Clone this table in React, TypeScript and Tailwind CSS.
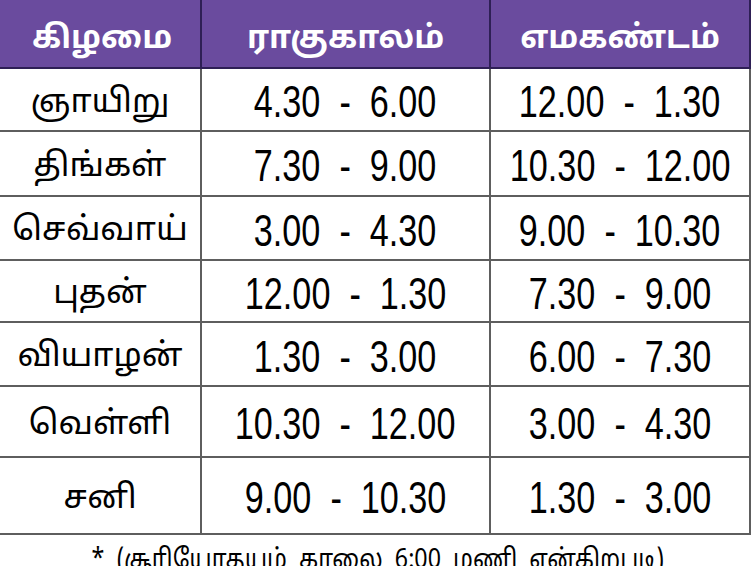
import React from 'react';

const rows = [
  { day: 'ஞாயிறு', rahu: ['4.30', '6.00'], ema: ['12.00', '1.30'], h: 'h-[63px]' },
  { day: 'திங்கள்', rahu: ['7.30', '9.00'], ema: ['10.30', '12.00'], h: 'h-[65px]' },
  { day: 'செவ்வாய்', rahu: ['3.00', '4.30'], ema: ['9.00', '10.30'], h: 'h-[64px]' },
  { day: 'புதன்', rahu: ['12.00', '1.30'], ema: ['7.30', '9.00'], h: 'h-[62px]' },
  { day: 'வியாழன்', rahu: ['1.30', '3.00'], ema: ['6.00', '7.30'], h: 'h-[64px]' },
  { day: 'வெள்ளி', rahu: ['10.30', '12.00'], ema: ['3.00', '4.30'], h: 'h-[71px]' },
  { day: 'சனி', rahu: ['9.00', '10.30'], ema: ['1.30', '3.00'], h: 'h-[77px]' },
];

const tamil = "font-['Noto_Sans_Tamil','Lohit_Tamil','Noto_Sans',sans-serif]";
const narrow = "font-['Liberation_Sans',Arial,sans-serif]";

const Range: React.FC<{ from: string; to: string }> = ({ from, to }) => (
  <span className={`${narrow} text-[45px] leading-none text-black whitespace-pre pt-1 inline-block scale-x-[0.76]`}>
    {from}  -  {to}
  </span>
);

export default function App() {
  return (
    <div className="w-[755px] h-[566px] overflow-hidden bg-white">
      <div className="grid grid-cols-[202px_289px_260px] w-[751px]">
        {['கிழமை', 'ராகுகாலம்', 'எமகண்டம்'].map((t, i) => (
          <div
            key={t}
            className={`h-[69px] bg-[#6a4b9e] border-b-2 border-r-2 border-[#2e1f55] flex items-center justify-center ${tamil} text-[32px] font-bold text-white pt-3`}
          >
            <span className={i === 0 ? 'pl-1' : ''}>{t}</span>
          </div>
        ))}
        {rows.map((r) => (
          <React.Fragment key={r.day}>
            <div className={`${r.h} border-b-2 border-r-2 border-[#5e5e5e] flex items-center justify-center ${tamil} text-[33px] text-black pt-2`}>
              {r.day}
            </div>
            <div className={`${r.h} border-b-2 border-r-2 border-[#5e5e5e] flex items-center justify-center`}>
              <Range from={r.rahu[0]} to={r.rahu[1]} />
            </div>
            <div className={`${r.h} border-b-2 border-r-2 border-[#5e5e5e] flex items-center justify-center`}>
              <Range from={r.ema[0]} to={r.ema[1]} />
            </div>
          </React.Fragment>
        ))}
      </div>
      <div className="pt-[13px] flex justify-center">
        <span className={`inline-block scale-x-[0.86] ${tamil} text-[27px] leading-none text-black whitespace-pre`}>
          *  (சூரியோதயம்  காலை  6:00  மணி  என்கிறபடி)
        </span>
      </div>
    </div>
  );
}
